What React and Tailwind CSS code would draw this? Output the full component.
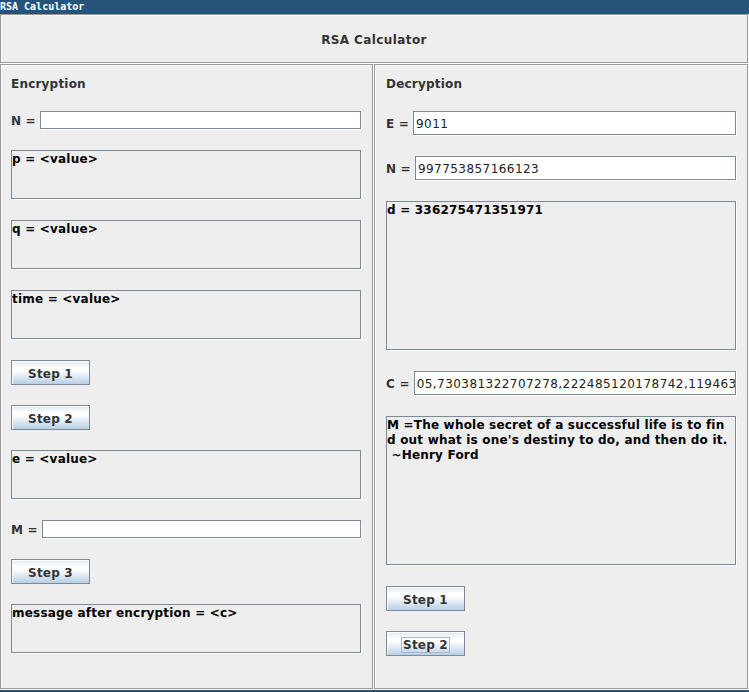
import React from "react";

const etched = "border border-[#999999] shadow-[inset_1px_1px_0_#ffffff,1px_1px_0_#ffffff]";
const fieldBox = "bg-white border border-[#7a8a99] shadow-[1px_1px_0_#ffffff] flex items-center pl-[2px] pt-[2px] overflow-hidden whitespace-nowrap text-[12px] tracking-[0.45px] text-[#222222]";
const areaBox = "w-[350px] h-[49px] border border-[#7a8a99] shadow-[1px_1px_0_#ffffff] bg-[#eeeeee] pt-px text-[12px] font-bold leading-[15px] tracking-[0.2px] text-black overflow-hidden";

const Heading = ({ children }) => (
  <div className="mt-[12px] h-[15px] leading-[15px] text-[12px] font-bold tracking-[0.2px] text-[#333333]">
    {children}
  </div>
);

const FieldRow = ({ label, value, height, className = "" }) => (
  <div className={`flex items-center gap-1 w-[350px] ${height} ${className}`}>
    <span className="relative top-px leading-[15px] text-[12px] font-bold tracking-[0.2px] text-[#333333] whitespace-pre">{label}</span>
    <div className={`flex-1 h-full ${fieldBox}`}>{value}</div>
  </div>
);

const TextArea = ({ lines, className = "" }) => (
  <div className={`${areaBox} ${className}`}>
    {lines.map((line, i) => (
      <div key={i} className="whitespace-pre">{line}</div>
    ))}
  </div>
);

const Button = ({ label, focused, className = "" }) => (
  <button
    className={`w-[79px] h-[25px] pt-[2px] border border-[#7a8a99] shadow-[inset_1px_1px_0_#ffffff] bg-[linear-gradient(to_bottom,#dde8f3_0%,#ffffff_30%,#ffffff_40%,#b8cfe5_100%)] flex items-center justify-center text-[12px] font-bold tracking-[0.2px] text-[#333333] ${className}`}
  >
    <span className={focused ? "border border-[#a3b8cc] px-px leading-[14px]" : "leading-[14px]"}>{label}</span>
  </button>
);

export default function App() {
  return (
    <div className="w-[749px] h-[692px] bg-[#eeeeee] font-['DejaVu_Sans',sans-serif] overflow-hidden">
      <div className="h-[14px] bg-[#26537a] text-white text-[10px] font-bold leading-[13px] font-['DejaVu_Sans_Mono',monospace] whitespace-nowrap">
        RSA Calculator
      </div>

      <div className={`w-[748px] h-[49px] mb-px ${etched} flex items-center justify-center pt-[2px]`}>
        <span className="text-[12px] font-bold tracking-[0.4px] text-[#333333]">RSA Calculator</span>
      </div>

      <div className="flex">
        <div className={`w-[373px] h-[625px] mr-px ${etched} pl-[10px] flex flex-col`}>
          <Heading>Encryption</Heading>
          <FieldRow label="N =" height="h-[18px]" className="mt-[19px]" />
          <TextArea lines={["p = <value>"]} className="mt-[21px]" />
          <TextArea lines={["q = <value>"]} className="mt-[21px]" />
          <TextArea lines={["time = <value>"]} className="mt-[21px]" />
          <Button label="Step 1" className="mt-[21px]" />
          <Button label="Step 2" className="mt-[20px]" />
          <TextArea lines={["e = <value>"]} className="mt-[20px]" />
          <FieldRow label="M =" height="h-[18px]" className="mt-[21px]" />
          <Button label="Step 3" className="mt-[21px]" />
          <TextArea lines={["message after encryption = <c>"]} className="mt-[20px]" />
        </div>

        <div className={`w-[374px] h-[625px] ${etched} pl-[11px] flex flex-col`}>
          <Heading>Decryption</Heading>
          <FieldRow label="E =" value="9011" height="h-[24px]" className="mt-[19px]" />
          <FieldRow label="N =" value="997753857166123" height="h-[24px]" className="mt-[21px]" />
          <TextArea lines={["d = 336275471351971"]} className="mt-[21px] !h-[149px]" />
          <FieldRow label="C =" value="05,730381322707278,222485120178742,119463" height="h-[24px]" className="mt-[21px]" />
          <TextArea
            lines={[
              "M =The whole secret of a successful life is to fin",
              "d out what is one's destiny to do, and then do it.",
              " ~Henry Ford",
            ]}
            className="mt-[21px] !h-[149px]"
          />
          <Button label="Step 1" className="mt-[21px]" />
          <Button label="Step 2" focused className="mt-[20px]" />
        </div>
      </div>

      <div className="mt-px h-[2px] bg-[#26537a]" />
    </div>
  );
}
